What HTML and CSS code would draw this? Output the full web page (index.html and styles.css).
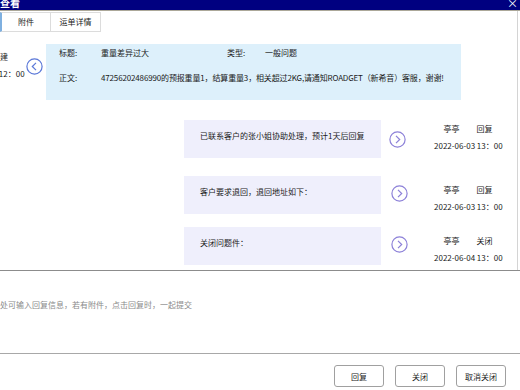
FILE: index.html
```html
<!DOCTYPE html>
<html lang="zh">
<head>
    <meta charset="UTF-8">
    <title>查看</title>
    <link rel="stylesheet" href="styles.css">
</head>
<body>
    <div class="titlebar">
        <span class="title">查看</span>
        <span class="close">×</span>
    </div>

    <div class="main">
        <ul class="tabs">
            <li class="tab active">附件</li>
            <li class="tab">运单详情</li>
        </ul>

        <div class="thread">
            <div class="row row-left">
                <div class="meta meta-left">
                    <div class="who">亭亭<span>创建</span></div>
                    <div class="when">2022-06-03 12：00</div>
                </div>
                <svg class="arrow arrow-left" width="17" height="17" viewBox="0 0 17 17">
                    <circle cx="8.5" cy="8.5" r="7.6" fill="none" stroke="#5b78d8" stroke-width="1.2"/>
                    <path d="M10 4.8 L6.3 8.5 L10 12.2" fill="none" stroke="#5b78d8" stroke-width="1.2"/>
                </svg>
                <div class="issue">
                    <div class="line">
                        <span class="label">标题:</span>
                        <span class="value">重量差异过大</span>
                        <span class="label label2">类型:</span>
                        <span>一般问题</span>
                    </div>
                    <div class="line">
                        <span class="label">正文:</span>
                        <span class="body-text">47256202486990的预报重量1，结算重量3，相关超过2KG,请通知ROADGET（新希音）客服，谢谢!</span>
                    </div>
                </div>
            </div>

            <div class="row row-right">
                <div class="bubble">已联系客户的张小姐协助处理，预计1天后回复</div>
                <svg class="arrow" width="17" height="17" viewBox="0 0 17 17">
                    <circle cx="8.5" cy="8.5" r="7.6" fill="none" stroke="#8c80d8" stroke-width="1.2"/>
                    <path d="M7 4.8 L10.7 8.5 L7 12.2" fill="none" stroke="#8c80d8" stroke-width="1.2"/>
                </svg>
                <div class="meta">
                    <div class="who">亭亭<span>回复</span></div>
                    <div class="when">2022-06-03 13：00</div>
                </div>
            </div>

            <div class="row row-right">
                <div class="bubble">客户要求退回，退回地址如下：</div>
                <svg class="arrow" width="17" height="17" viewBox="0 0 17 17">
                    <circle cx="8.5" cy="8.5" r="7.6" fill="none" stroke="#8c80d8" stroke-width="1.2"/>
                    <path d="M7 4.8 L10.7 8.5 L7 12.2" fill="none" stroke="#8c80d8" stroke-width="1.2"/>
                </svg>
                <div class="meta">
                    <div class="who">亭亭<span>回复</span></div>
                    <div class="when">2022-06-03 13：00</div>
                </div>
            </div>

            <div class="row row-right">
                <div class="bubble">关闭问题件：</div>
                <svg class="arrow" width="17" height="17" viewBox="0 0 17 17">
                    <circle cx="8.5" cy="8.5" r="7.6" fill="none" stroke="#8c80d8" stroke-width="1.2"/>
                    <path d="M7 4.8 L10.7 8.5 L7 12.2" fill="none" stroke="#8c80d8" stroke-width="1.2"/>
                </svg>
                <div class="meta">
                    <div class="who">亭亭<span>关闭</span></div>
                    <div class="when">2022-06-04 13：00</div>
                </div>
            </div>
        </div>
    </div>

    <div class="reply">
        <div class="placeholder">处可输入回复信息，若有附件，点击回复时，一起提交</div>
    </div>

    <div class="footer">
        <button class="btn">回复</button>
        <button class="btn">关闭</button>
        <button class="btn">取消关闭</button>
    </div>
</body>
</html>
```

FILE: styles.css
```css
body {
    margin: 0;
    width: 520px;
    height: 390px;
    overflow: hidden;
    background: #fff;
    font-family: "Noto Sans CJK SC", "Noto Sans", sans-serif;
    font-size: 8px;
    color: #1a1a1a;
}

.titlebar {
    height: 10px;
    background: #000080;
    border-bottom: 1px solid #aca899;
    display: flex;
    justify-content: space-between;
    overflow: hidden;
    color: #fff;
}
.title {
    font-size: 10px;
    font-weight: bold;
    line-height: 5px;
}
.close {
    font-size: 11px;
    line-height: 7px;
    padding-right: 2px;
}

.main {
    width: 517px;
    height: 259px;
    border-right: 1px solid #d4d4d4;
    overflow: hidden;
}

.tabs {
    list-style: none;
    margin: 1px 0 0;
    padding: 0;
    display: flex;
}
.tab {
    width: 49px;
    height: 18px;
    line-height: 18px;
    border: 1px solid #dcdcdc;
    margin-right: -1px;
    text-align: center;
}
.tab.active {
    border-left: 2px solid #7fb0e0;
    width: 48px;
}

.thread {
    padding-top: 12px;
}

.row {
    display: flex;
    align-items: flex-start;
}

.meta {
    width: 68px;
    text-align: center;
    white-space: nowrap;
    line-height: 17px;
    flex-shrink: 0;
}
.meta .who span {
    margin-left: 17px;
}
.meta-left {
    margin-left: -44px;
    margin-top: 4px;
}
.meta-left .who span {
    margin-left: 4px;
}

.arrow {
    flex-shrink: 0;
    display: block;
}
.arrow-left {
    margin: 14px 3px 0 2px;
}

.issue {
    width: 415px;
    height: 56px;
    background: #ddf0fb;
    padding: 3px 0 0 13px;
    box-sizing: border-box;
    flex-shrink: 0;
}
.issue .line {
    display: flex;
    line-height: 12px;
    white-space: nowrap;
}
.issue .line + .line {
    margin-top: 13px;
}
.label {
    width: 42px;
}
.value {
    width: 126px;
}
.label2 {
    width: 38px;
}
.body-text {
    letter-spacing: -0.15px;
}

.row-right {
    margin-left: 184px;
    margin-top: 18px;
}
.row-right:nth-child(2) {
    margin-top: 20px;
}
.row-right:nth-child(4) {
    margin-top: 12px;
}
.bubble {
    width: 197px;
    height: 38px;
    background: #efeffc;
    padding: 10px 0 0 16px;
    box-sizing: border-box;
    line-height: 12px;
}
.row-right .arrow {
    margin: 9px 0 0 10px;
}
.row-right .meta {
    margin: 5px 0 0 26px;
}
.row-right:nth-child(2) .arrow {
    margin: 11px 2px 0 8px;
}
.row-right:nth-child(2) .meta {
    margin-top: 0;
}

.reply {
    height: 82px;
    border-top: 1px solid #8c8c8c;
    border-bottom: 1px solid #a8a8a8;
}
.placeholder {
    padding-top: 28px;
    color: #8a8a8a;
    line-height: 12px;
}

.footer {
    display: flex;
    justify-content: flex-end;
    gap: 11px;
    padding: 11px 14px 0 0;
}
.btn {
    width: 50px;
    height: 22px;
    border: 1px solid #a0a0a0;
    border-radius: 3px;
    background: #fff;
    font-family: inherit;
    font-size: 8px;
    color: #222;
    padding: 0;
}
```
